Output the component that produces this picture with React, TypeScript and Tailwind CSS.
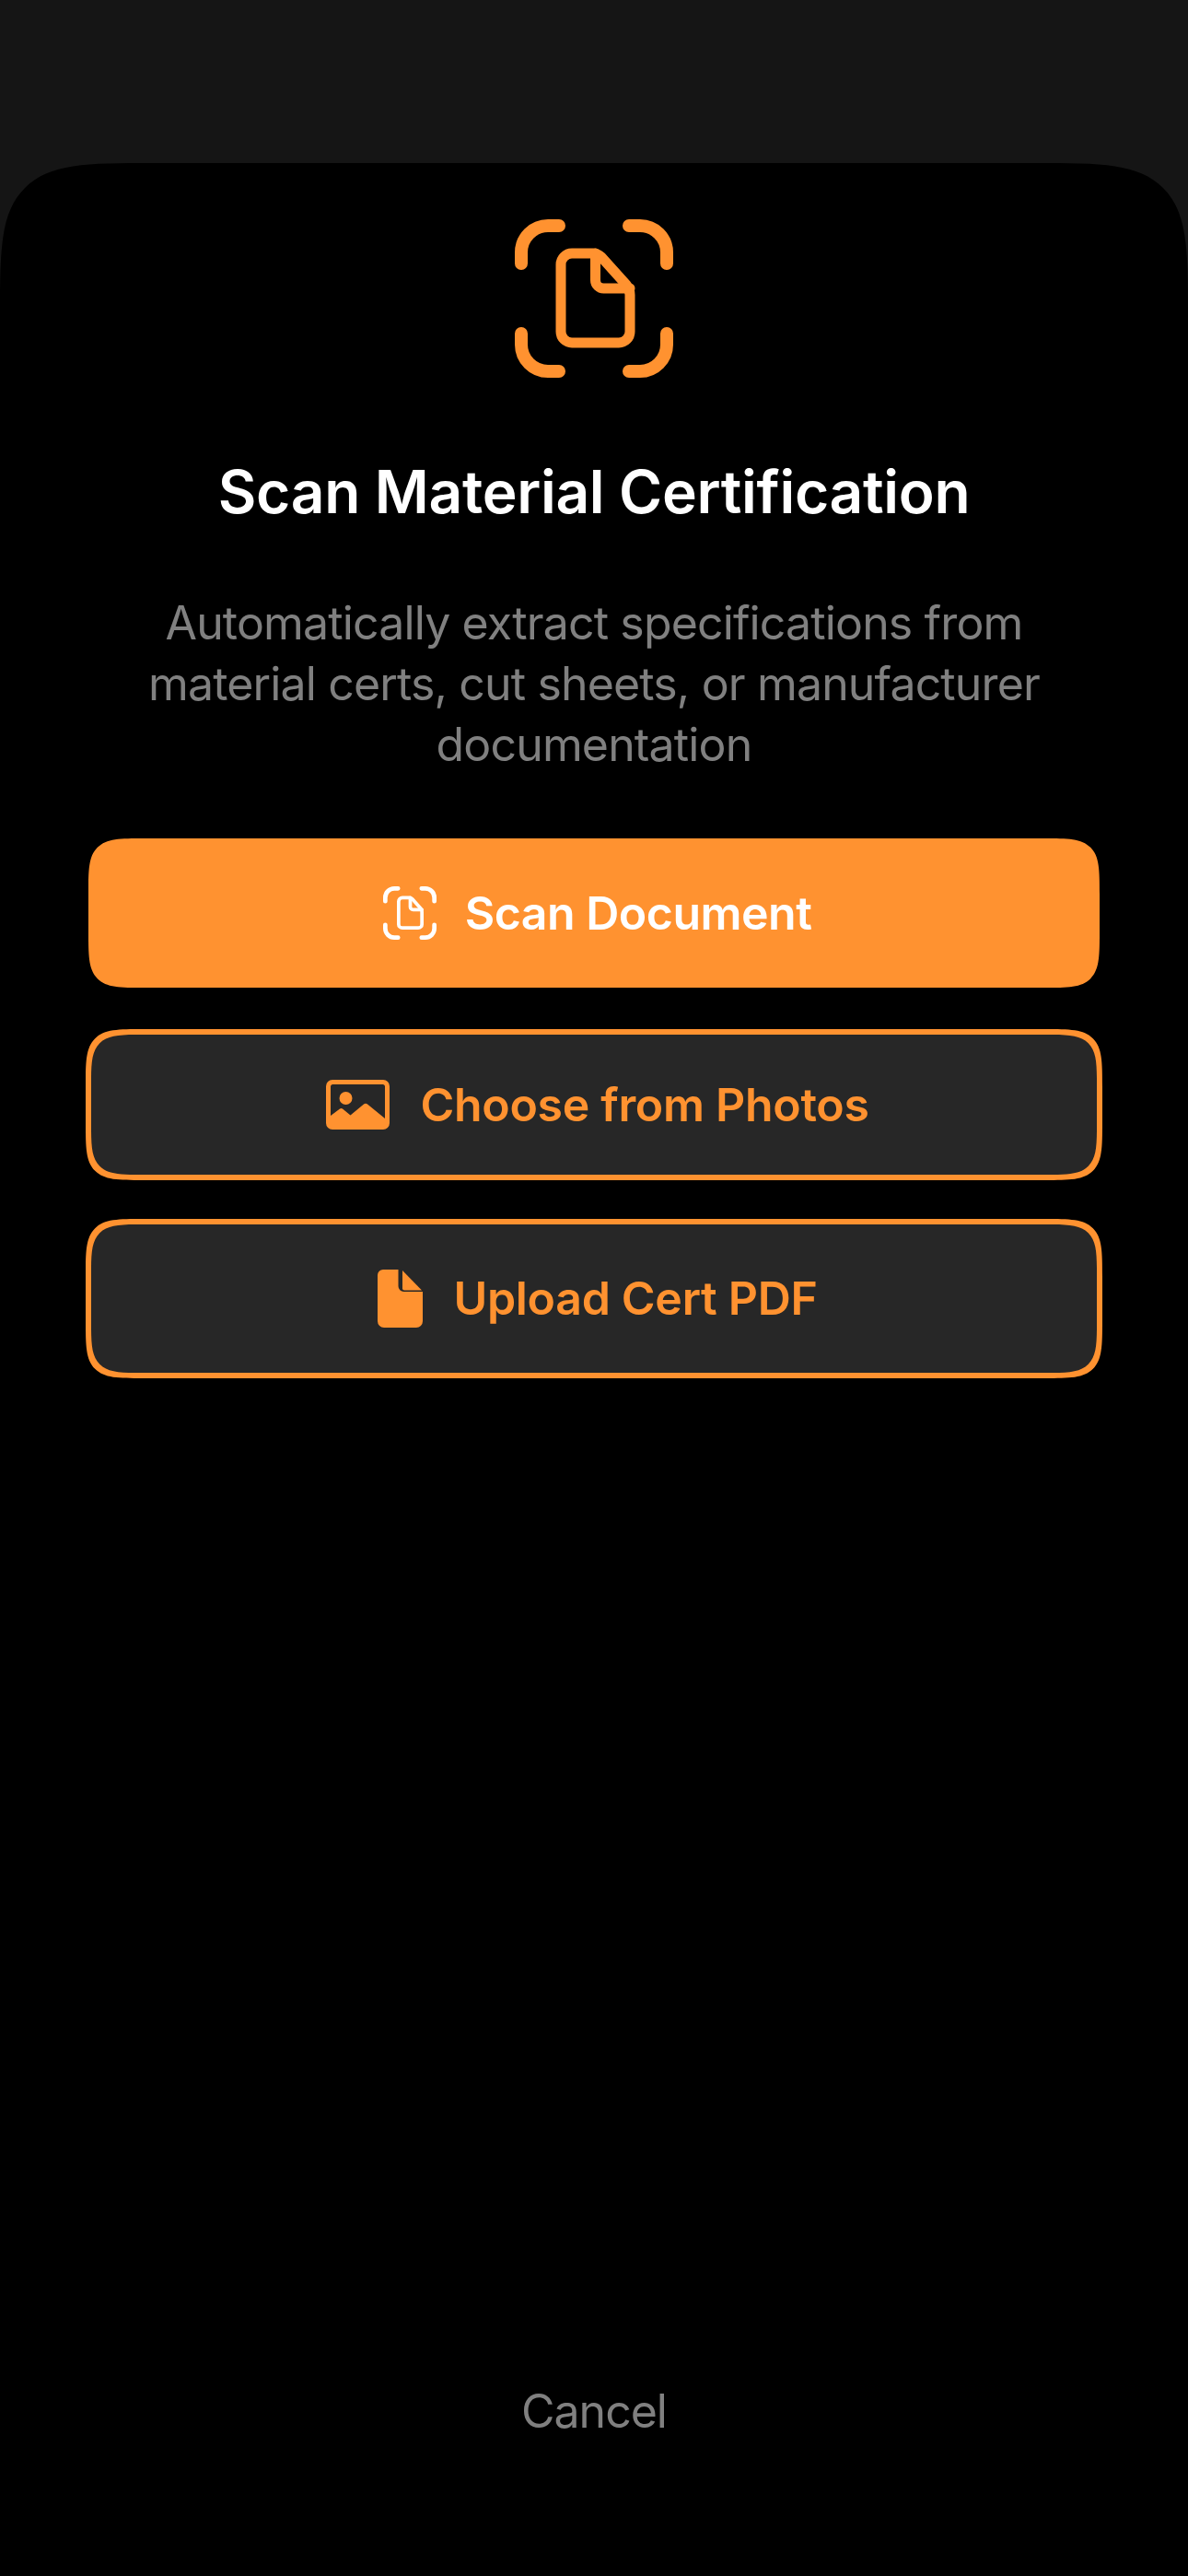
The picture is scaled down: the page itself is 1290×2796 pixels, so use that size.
function ScanDocIcon({ className }: { className: string }) {
  return (
    <svg viewBox="0 0 172 172" fill="none" stroke="currentColor" strokeLinecap="round" strokeLinejoin="round" className={className}>
      <g strokeWidth="14">
        <path d="M7 48V36A29 29 0 0 1 36 7H48" />
        <path d="M124 7H136A29 29 0 0 1 165 36V48" />
        <path d="M7 124V136A29 29 0 0 0 36 165H48" />
        <path d="M165 124V136A29 29 0 0 1 136 165H124" />
      </g>
      <g strokeWidth="11">
        <path d="M62 37H85Q90 37 94 41L121 71Q125 76 125 82V122A12 12 0 0 1 113 134H62A12 12 0 0 1 50 122V49A12 12 0 0 1 62 37Z" />
        <path d="M87.5 37V66A9 9 0 0 0 96.5 75H125" />
      </g>
    </svg>
  );
}

function PhotoIcon() {
  return (
    <svg viewBox="0 0 69 54" className="w-[69px] h-[54px] shrink-0" fill="currentColor">
      <path fillRule="evenodd" d="M7 0H62A7 7 0 0 1 69 7V47A7 7 0 0 1 62 54H7A7 7 0 0 1 0 47V7A7 7 0 0 1 7 0ZM7.500 5A2.500 2.500 0 0 0 5 7.500V39L15 31.500Q16.500 30.500 18 31.500L26.500 38.500L41 26.500Q43 25 45 26.500L64 42V7.500A2.500 2.500 0 0 0 61.500 5Z" />
      <circle cx="21.500" cy="20" r="7" />
    </svg>
  );
}

function FileIcon() {
  return (
    <svg viewBox="0 0 49 63" className="w-[49px] h-[63px] shrink-0" fill="currentColor">
      <path d="M6 0H22.500V18A6 6 0 0 0 28.500 24H49V56A7 7 0 0 1 42 63H7A7 7 0 0 1 0 56V6A6 6 0 0 1 6 0Z" />
      <path d="M27 1L48 22.500H29A2 2 0 0 1 27 20.500Z" />
    </svg>
  );
}

export default function App() {
  return (
    <div className="flex flex-col h-[2796px] w-[1290px] pt-[177px] bg-[#151515] font-['Inter',sans-serif]">
      <div className="flex flex-col flex-1 items-center rounded-t-[170px] [corner-shape:squircle] bg-black">
        <div className="mt-[61px] text-[#ff9230]">
          <ScanDocIcon className="w-[172px] h-[172px]" />
        </div>
        <h1 className="mt-[88px] text-[64px] leading-[72px] font-semibold text-white tracking-[-0.3px]">
          Scan Material Certification
        </h1>
        <p className="mt-[73px] w-[1020px] text-center text-[50px] leading-[66px] text-[#808080] tracking-[-0.85px]">
          Automatically extract specifications from material certs, cut sheets, or manufacturer documentation
        </p>
        <div className="flex flex-col items-center mt-[69px] w-full">
          <button className="flex justify-center items-center gap-[31px] pl-[7px] w-[1098px] h-[162px] rounded-[62px] [corner-shape:squircle] bg-[#ff9230] text-white">
            <ScanDocIcon className="w-[58px] h-[58px]" />
            <span className="text-[50px] font-semibold tracking-[-0.5px]">Scan Document</span>
          </button>
          <button className="flex justify-center items-center gap-[33px] pl-[8px] mt-[45px] w-[1104px] h-[164px] rounded-[64px] [corner-shape:squircle] border-[6px] border-[#ff9230] bg-[#272727] text-[#ff9230]">
            <PhotoIcon />
            <span className="text-[50px] font-semibold tracking-[-0.3px]">Choose from Photos</span>
          </button>
          <button className="flex justify-center items-center gap-[33px] pl-[8px] mt-[42px] w-[1104px] h-[173px] rounded-[64px] [corner-shape:squircle] border-[6px] border-[#ff9230] bg-[#272727] text-[#ff9230]">
            <FileIcon />
            <span className="text-[50px] font-semibold tracking-[-0.3px]">Upload Cert PDF</span>
          </button>
        </div>
        <button className="mt-auto mb-[148px] text-[50px] leading-[62px] text-[#808080] tracking-[-1px]">Cancel</button>
      </div>
    </div>
  );
}
